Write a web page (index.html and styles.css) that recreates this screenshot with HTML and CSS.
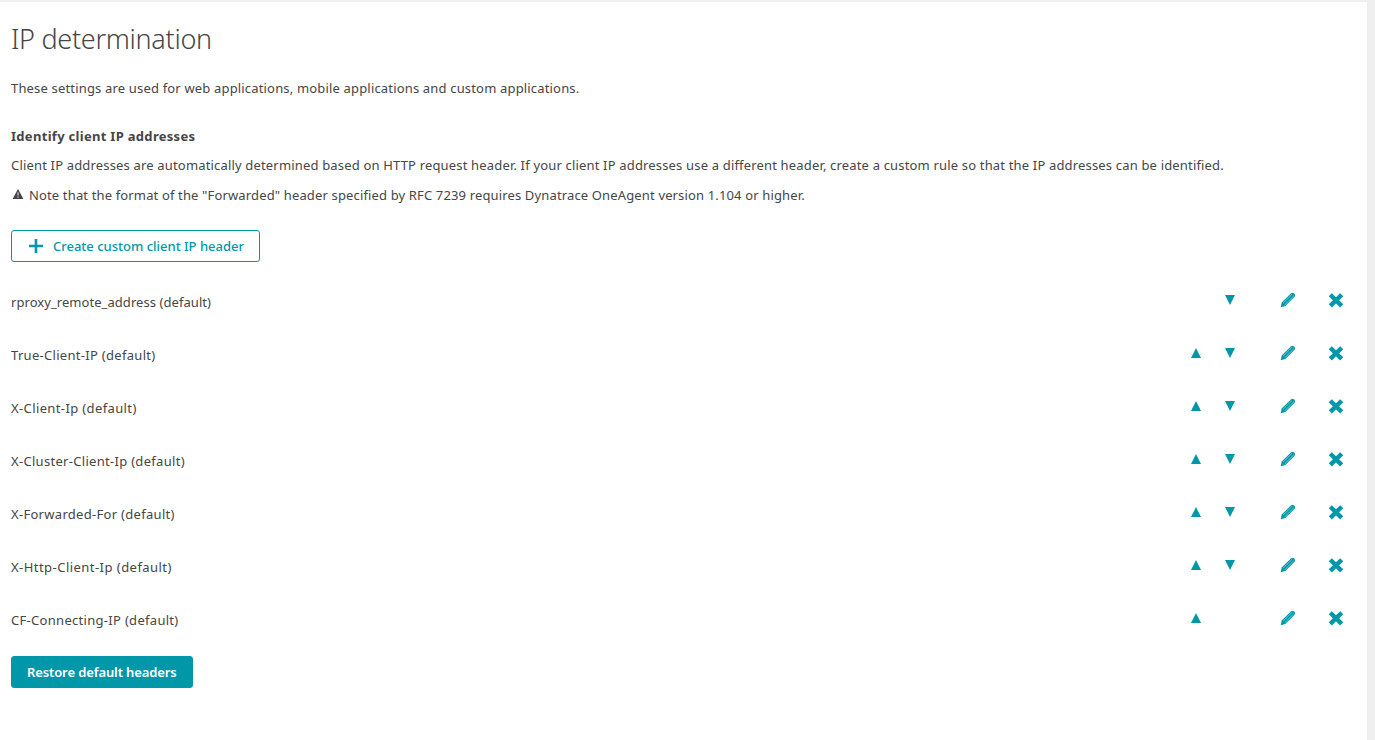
FILE: index.html
```
<!DOCTYPE html>
<html lang="en">
<head>
    <meta charset="UTF-8">
    <meta name="viewport" content="width=device-width, initial-scale=1.0">
    <title>IP determination</title>
    <link rel="stylesheet" href="styles.css">
</head>
<body>
    <svg class="sprite" aria-hidden="true">
        <symbol id="icon-up" viewBox="0 0 10 10"><path d="M5 0l5 10H0z"/></symbol>
        <symbol id="icon-down" viewBox="0 0 10 10"><path d="M0 0h10L5 10z"/></symbol>
        <symbol id="icon-edit" viewBox="0 0 16 16">
            <path d="M.7 15.3l1-4.9L10.9 1.6q1.6-1.5 3.2-.2q1.8 1.5.5 3.3l-9.2 9.2z"/>
            <path class="pencil-line" d="M3 11.2L12.2 2.2M4.7 12.9l9.1-9.1"/>
        </symbol>
        <symbol id="icon-delete" viewBox="0 0 16 16"><path class="cross" d="M2.3 2.7l11.4 11.2M13.7 2.7L2.3 13.9"/></symbol>
    </svg>

    <div class="container">
        <h1>IP determination</h1>
        <p class="intro">These settings are used for web applications, mobile applications and custom applications.</p>

        <h2>Identify client IP addresses</h2>
        <p class="description">Client IP addresses are automatically determined based on HTTP request header. If your client IP addresses use a different header, create a custom rule so that the IP addresses can be identified.</p>
        <p class="note">
            <svg class="warning" viewBox="0 0 12 11"><path d="M6 0l6 11H0z"/><path class="mark" d="M6 3.6v3.6M6 8.2v1.4"/></svg>
            <span>Note that the format of the "Forwarded" header specified by RFC 7239 requires Dynatrace OneAgent version 1.104 or higher.</span>
        </p>

        <button class="btn btn-create">
            <svg class="plus" viewBox="0 0 14 14"><path d="M7 0v14M0 7h14"/></svg>
            <span>Create custom client IP header</span>
        </button>

        <div class="header-list" id="headerList">
            <!-- Rows will be populated dynamically -->
        </div>

        <button class="btn btn-restore"><span>Restore default headers</span></button>
    </div>

    <script>
        const headers = [
            "rproxy_remote_address", "True-Client-IP", "X-Client-Ip", "X-Cluster-Client-Ip",
            "X-Forwarded-For", "X-Http-Client-Ip", "CF-Connecting-IP"
        ];

        function icon(name, label) {
            return `<button class="icon-btn ${name}" aria-label="${label}"><svg><use href="#icon-${name}"/></svg></button>`;
        }

        document.getElementById('headerList').innerHTML = headers.map((header, index) => `
            <div class="row">
                <span class="name">${header} (default)</span>
                ${index > 0 ? icon('up', 'Move up') : ''}
                ${index < headers.length - 1 ? icon('down', 'Move down') : ''}
                ${icon('edit', 'Edit')}
                ${icon('delete', 'Delete')}
            </div>
        `).join('');
    </script>
</body>
</html>
```
FILE: styles.css
```
* {
    box-sizing: border-box;
}
body {
    margin: 0;
    padding: 2px 8px 0 0;
    background-color: #efefef;
    color: #454646;
    font-family: "Noto Sans", sans-serif;
    font-size: 13px;
    line-height: 20px;
}
.sprite {
    display: none;
}
.container {
    height: 738px;
    padding: 19px 16px 0 11px;
    background: white;
    white-space: nowrap;
}
h1 {
    margin: 0;
    font-size: 27px;
    font-weight: 300;
    line-height: 36px;
    letter-spacing: -0.3px;
}
h2 {
    margin: 28px 0 0;
    font-size: 13px;
    font-weight: bold;
    line-height: 20px;
    letter-spacing: 0.3px;
}
p {
    margin: 0;
    letter-spacing: 0.17px;
}
.intro {
    margin-top: 21px;
}
.description {
    margin-top: 9px;
}
.note {
    display: flex;
    align-items: center;
    gap: 5px;
    margin-top: 10px;
    padding-left: 1px;
    letter-spacing: 0.145px;
}
.warning {
    width: 12px;
    height: 10px;
    margin-bottom: 2px;
    fill: #454646;
}
.warning .mark {
    stroke: white;
    stroke-width: 1;
}
.btn {
    display: flex;
    align-items: center;
    height: 32px;
    padding: 0 15px;
    border: 1px solid #0098a9;
    border-radius: 3px;
    font-family: inherit;
    font-size: 13px;
    cursor: pointer;
}
.btn-create {
    gap: 10px;
    width: 249px;
    margin-top: 25px;
    padding-left: 17px;
    background: white;
    color: #0098a9;
    font-weight: 500;
}
.btn-restore {
    width: 182px;
    background: #0098a9;
    color: white;
    font-weight: 600;
    letter-spacing: -0.11px;
}
.plus {
    width: 14px;
    height: 14px;
    stroke: #0098a9;
    stroke-width: 2.6;
}
.header-list {
    padding: 13px 0 10px;
}
.row {
    display: grid;
    grid-template-columns: 1fr 10px 10px 37px 24px;
    column-gap: 24px;
    align-items: center;
    height: 53px;
    padding-right: 7px;
    letter-spacing: 0.3px;
}
.row:nth-child(1) {
    letter-spacing: 0.06px;
}
.row:nth-child(3) {
    letter-spacing: 0.38px;
}
.row:nth-child(6) {
    letter-spacing: 0.46px;
}
.icon-btn {
    grid-row: 1;
    display: flex;
    justify-content: flex-end;
    margin-bottom: 4px;
    padding: 0;
    border: none;
    background: none;
    cursor: pointer;
}
.icon-btn svg {
    width: 16px;
    height: 16px;
    fill: #0098a9;
}
.up {
    grid-column: 2;
}
.down {
    grid-column: 3;
}
.up svg, .down svg {
    width: 10px;
    height: 10px;
}
.edit {
    grid-column: 4;
}
.delete {
    grid-column: 5;
}
.pencil-line {
    stroke: #b5e0e5;
    stroke-width: 0.6;
}
.cross {
    stroke: #0098a9;
    stroke-width: 4.4;
}
```
